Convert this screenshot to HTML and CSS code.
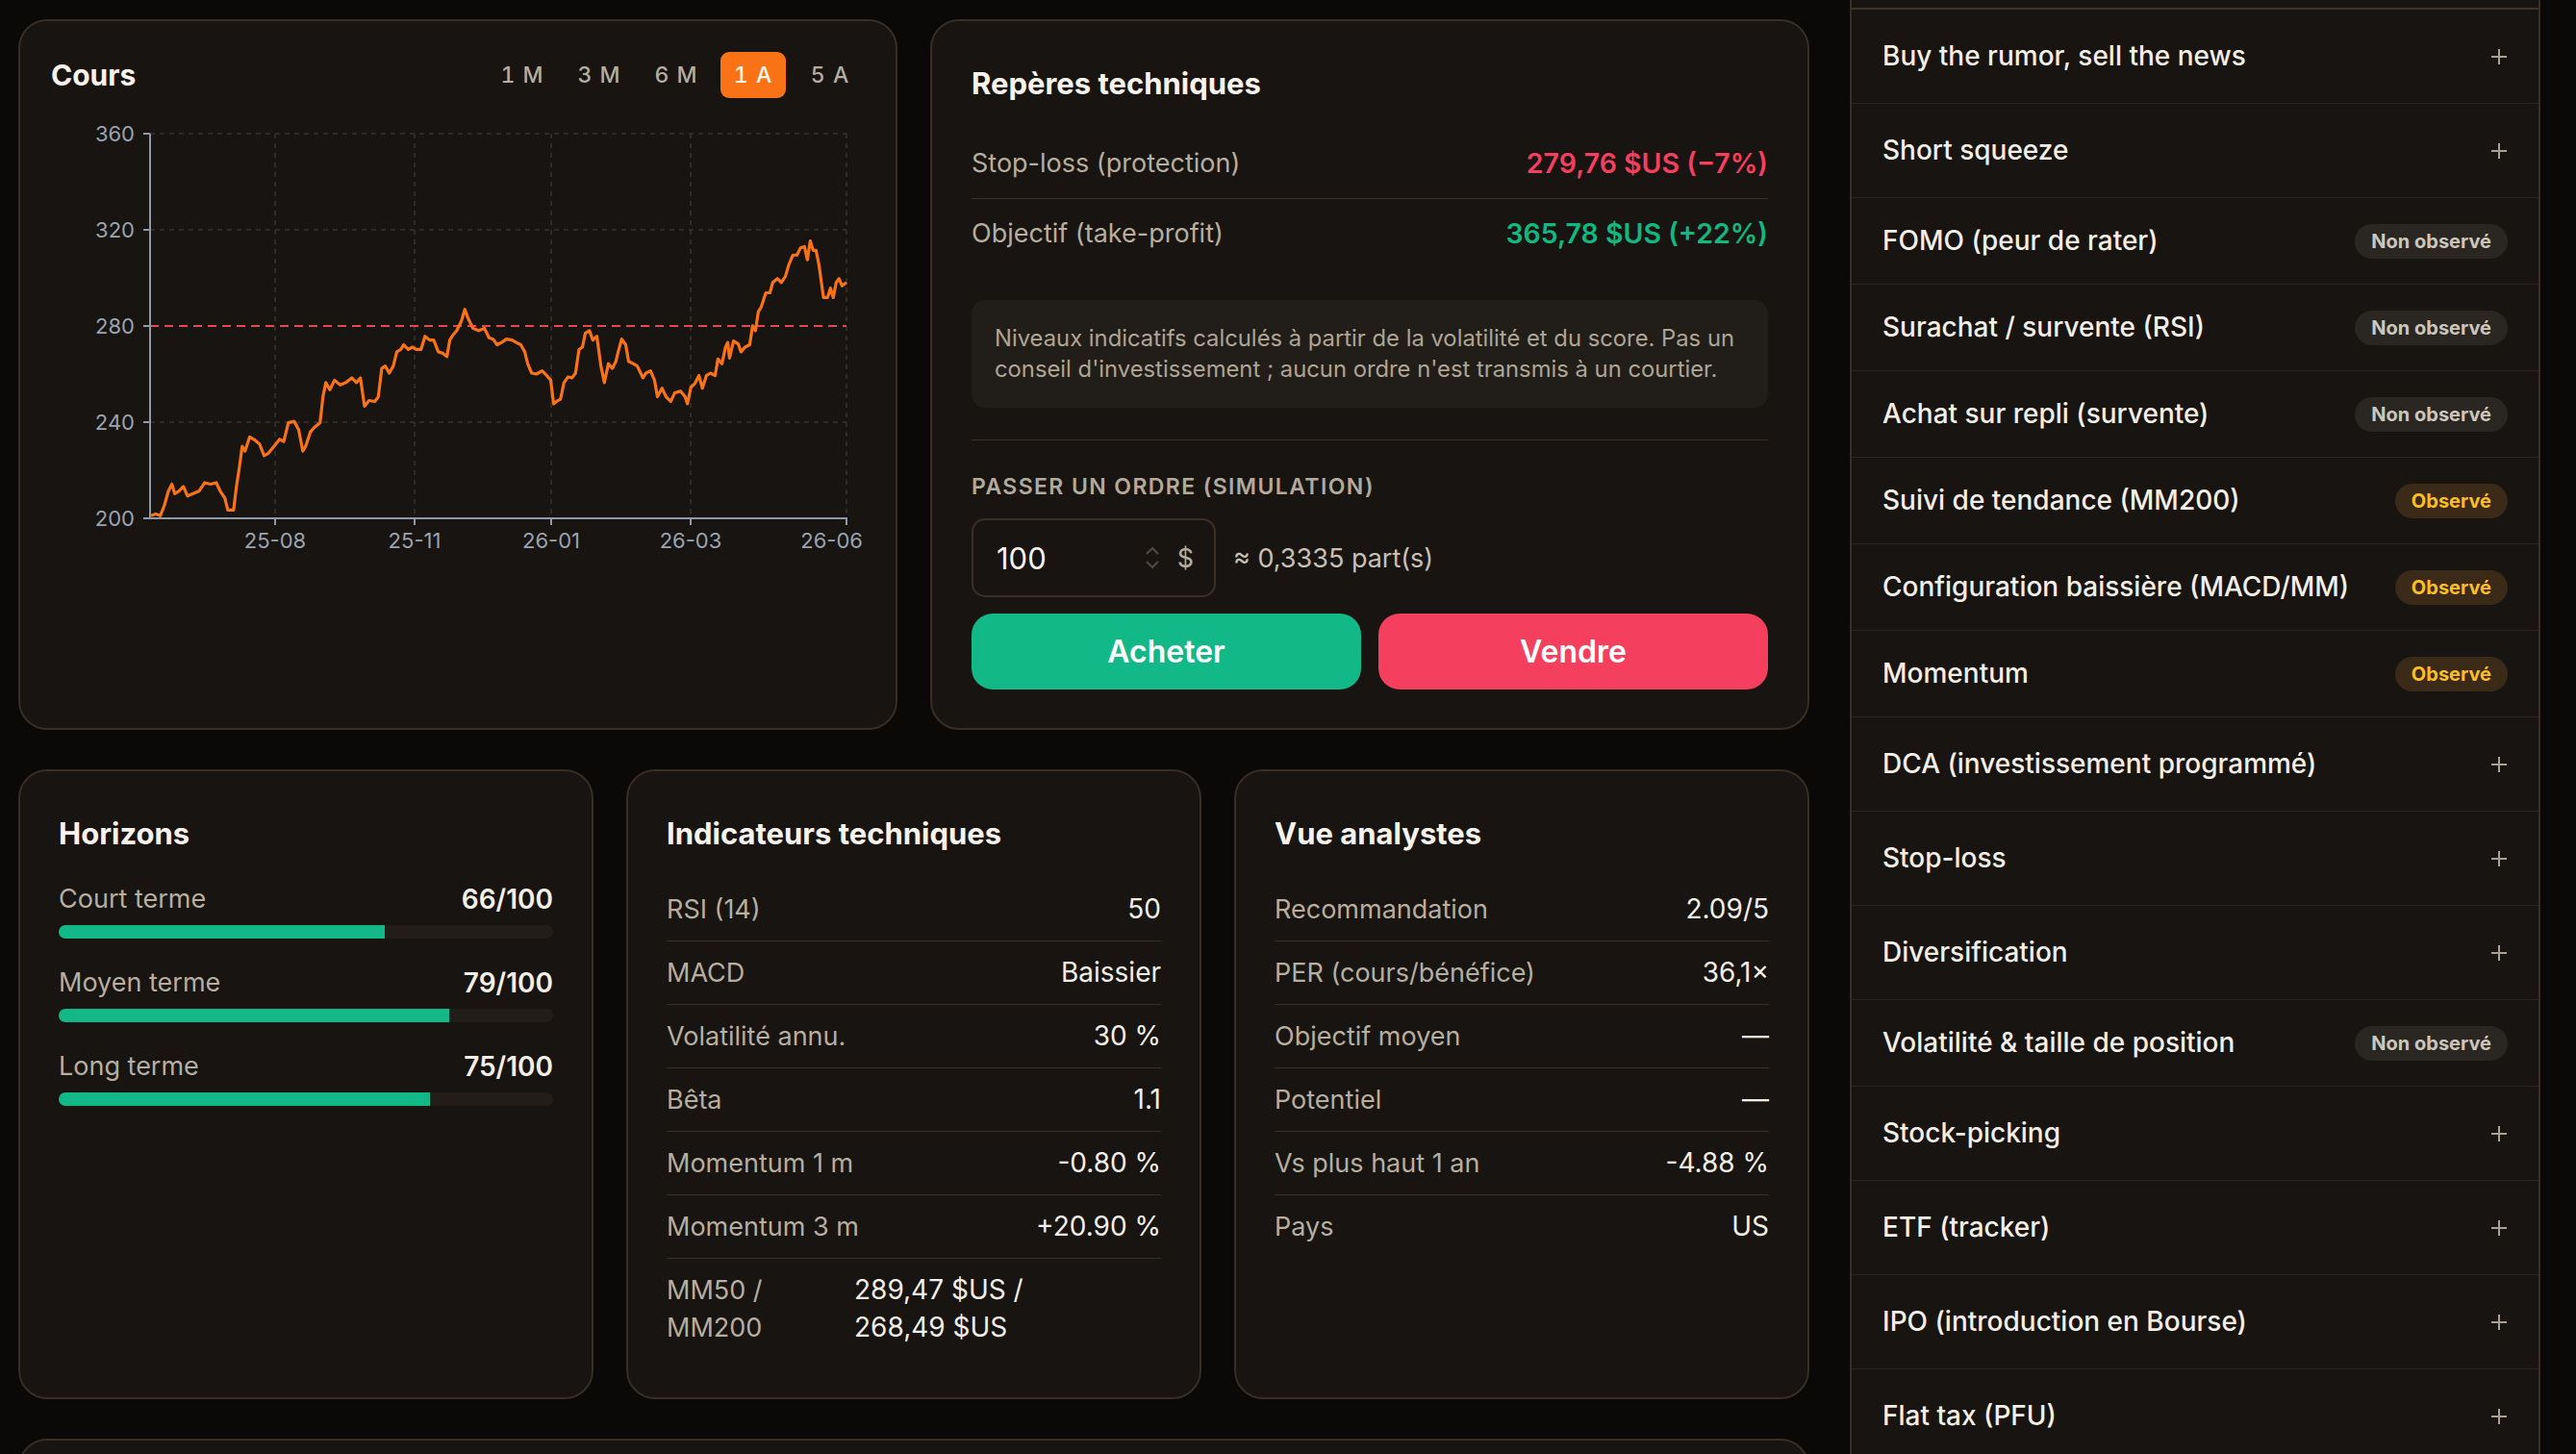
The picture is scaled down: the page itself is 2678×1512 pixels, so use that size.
FILE: index.html
```html
<!DOCTYPE html>
<html lang="fr">
<head>
    <meta charset="UTF-8">
    <meta name="viewport" content="width=device-width, initial-scale=1.0">
    <title>Analyse</title>
    <link rel="stylesheet" href="styles.css">
</head>
<body>
    <div class="page">
        <main class="main">
            <section class="top-row">
                <div class="card chart-card">
                    <div class="card-head">
                        <h2>Cours</h2>
                        <div class="tabs">
                            <span class="tab">1 M</span>
                            <span class="tab">3 M</span>
                            <span class="tab">6 M</span>
                            <span class="tab active">1 A</span>
                            <span class="tab">5 A</span>
                        </div>
                    </div>
                    <svg class="chart" viewBox="53 115 846 470" width="846" height="470">
                        <g class="grid">
                            <line x1="156" y1="139" x2="880" y2="139"/>
                            <line x1="156" y1="239" x2="880" y2="239"/>
                            <line x1="156" y1="439" x2="880" y2="439"/>
                            <line x1="286" y1="139" x2="286" y2="539"/>
                            <line x1="431" y1="139" x2="431" y2="539"/>
                            <line x1="573" y1="139" x2="573" y2="539"/>
                            <line x1="718" y1="139" x2="718" y2="539"/>
                            <line x1="880" y1="139" x2="880" y2="539"/>
                        </g>
                        <line class="stop-line" x1="156" y1="339" x2="880" y2="339"/>
                        <g class="axis">
                            <line x1="156" y1="139" x2="156" y2="540"/>
                            <line x1="155" y1="539" x2="881" y2="539"/>
                            <line x1="149" y1="139" x2="156" y2="139"/>
                            <line x1="149" y1="239" x2="156" y2="239"/>
                            <line x1="149" y1="339" x2="156" y2="339"/>
                            <line x1="149" y1="439" x2="156" y2="439"/>
                            <line x1="149" y1="539" x2="156" y2="539"/>
                            <line x1="286" y1="539" x2="286" y2="546"/>
                            <line x1="431" y1="539" x2="431" y2="546"/>
                            <line x1="573" y1="539" x2="573" y2="546"/>
                            <line x1="718" y1="539" x2="718" y2="546"/>
                            <line x1="880" y1="539" x2="880" y2="546"/>
                        </g>
                        <g class="labels">
                            <text x="140" y="147" text-anchor="end">360</text>
                            <text x="140" y="247" text-anchor="end">320</text>
                            <text x="140" y="347" text-anchor="end">280</text>
                            <text x="140" y="447" text-anchor="end">240</text>
                            <text x="140" y="547" text-anchor="end">200</text>
                            <text x="286" y="570" text-anchor="middle">25-08</text>
                            <text x="431" y="570" text-anchor="middle">25-11</text>
                            <text x="573" y="570" text-anchor="middle">26-01</text>
                            <text x="718" y="570" text-anchor="middle">26-03</text>
                            <text x="897" y="570" text-anchor="end">26-06</text>
                        </g>
                        <!-- traced points, scaled down into the plot -->
                        <g transform="scale(0.59952 0.49116)">
                            <path class="price" d="M262 1092 L270 1088 L278 1092 L285 1070 L292 1040 L298 1025 L303 1045 L310 1040 L318 1030 L325 1050 L335 1045 L345 1040 L355 1022 L365 1025 L375 1022 L382 1040 L390 1055 L395 1080 L405 1080 L410 1030 L415 990 L420 945 L425 955 L433 925 L440 930 L450 940 L458 965 L465 960 L475 945 L485 930 L492 935 L500 895 L510 892 L518 910 L525 955 L530 945 L538 915 L545 905 L555 895 L560 840 L565 810 L572 825 L580 805 L590 815 L600 810 L610 800 L618 810 L625 800 L632 860 L640 848 L650 850 L656 840 L662 780 L668 775 L675 790 L682 775 L688 745 L695 740 L700 730 L708 740 L715 735 L722 740 L730 740 L737 712 L745 720 L752 720 L760 745 L768 748 L775 755 L780 720 L785 710 L792 700 L800 680 L806 655 L812 675 L820 695 L830 700 L840 695 L848 715 L855 718 L862 730 L870 725 L878 718 L888 720 L895 725 L903 730 L910 745 L915 770 L922 790 L930 792 L940 785 L948 795 L955 805 L960 855 L965 850 L972 845 L978 810 L985 798 L992 800 L998 790 L1004 740 L1010 735 L1015 705 L1022 700 L1028 720 L1035 712 L1042 775 L1048 810 L1055 770 L1062 780 L1068 765 L1072 745 L1078 718 L1085 730 L1090 765 L1098 770 L1105 775 L1115 800 L1120 790 L1128 785 L1135 805 L1140 840 L1148 822 L1155 840 L1163 850 L1170 832 L1180 828 L1188 840 L1192 855 L1198 820 L1205 812 L1212 795 L1218 822 L1225 795 L1232 790 L1240 795 L1245 760 L1252 770 L1258 735 L1262 725 L1265 758 L1272 722 L1280 728 L1285 745 L1292 735 L1300 730 L1305 690 L1310 700 L1315 660 L1320 650 L1328 620 L1335 620 L1340 598 L1348 590 L1355 598 L1362 585 L1368 560 L1375 540 L1382 540 L1388 525 L1395 522 L1400 550 L1405 510 L1410 530 L1415 530 L1420 560 L1428 630 L1435 630 L1440 610 L1445 630 L1450 598 L1455 590 L1460 605 L1468 598"/>
                        </g>
                    </svg>
                </div>

                <div class="card levels-card">
                    <h2>Repères techniques</h2>
                    <div class="levels">
                        <div class="level">
                            <span class="level-name">Stop-loss (protection)</span>
                            <span class="level-value down">279,76 $US (−7%)</span>
                        </div>
                        <div class="level">
                            <span class="level-name">Objectif (take-profit)</span>
                            <span class="level-value up">365,78 $US (+22%)</span>
                        </div>
                    </div>
                    <p class="note">Niveaux indicatifs calculés à partir de la volatilité et du score. Pas un conseil d'investissement ; aucun ordre n'est transmis à un courtier.</p>
                    <div class="divider"></div>
                    <div class="order-label">Passer un ordre (simulation)</div>
                    <div class="order-input">
                        <div class="amount">
                            <span class="amount-num">100</span>
                            <svg class="spinner" width="16" height="30" viewBox="0 0 16 30">
                                <path d="M2 11 L8 5 L14 11 M2 19 L8 25 L14 19"/>
                            </svg>
                            <span class="amount-cur">$</span>
                        </div>
                        <span class="shares">≈ 0,3335 part(s)</span>
                    </div>
                    <div class="order-buttons">
                        <button class="btn buy">Acheter</button>
                        <button class="btn sell">Vendre</button>
                    </div>
                </div>
            </section>

            <section class="mid-row">
                <div class="card stat-card">
                    <h2>Horizons</h2>
                    <div class="horizon">
                        <div class="horizon-head"><span>Court terme</span><b>66/100</b></div>
                        <div class="bar"><div class="bar-fill" style="width: 66%"></div></div>
                    </div>
                    <div class="horizon">
                        <div class="horizon-head"><span>Moyen terme</span><b>79/100</b></div>
                        <div class="bar"><div class="bar-fill" style="width: 79%"></div></div>
                    </div>
                    <div class="horizon">
                        <div class="horizon-head"><span>Long terme</span><b>75/100</b></div>
                        <div class="bar"><div class="bar-fill" style="width: 75%"></div></div>
                    </div>
                </div>

                <div class="card stat-card">
                    <h2>Indicateurs techniques</h2>
                    <div class="kv-list">
                        <div class="kv"><span class="k">RSI (14)</span><span class="v">50</span></div>
                        <div class="kv"><span class="k">MACD</span><span class="v">Baissier</span></div>
                        <div class="kv"><span class="k">Volatilité annu.</span><span class="v">30 %</span></div>
                        <div class="kv"><span class="k">Bêta</span><span class="v">1.1</span></div>
                        <div class="kv"><span class="k">Momentum 1 m</span><span class="v">-0.80 %</span></div>
                        <div class="kv"><span class="k">Momentum 3 m</span><span class="v">+20.90 %</span></div>
                        <div class="kv kv-wrap"><span class="k">MM50 / MM200</span><span class="v">289,47 $US / 268,49 $US</span></div>
                    </div>
                </div>

                <div class="card stat-card">
                    <h2>Vue analystes</h2>
                    <div class="kv-list">
                        <div class="kv"><span class="k">Recommandation</span><span class="v">2.09/5</span></div>
                        <div class="kv"><span class="k">PER (cours/bénéfice)</span><span class="v">36,1×</span></div>
                        <div class="kv"><span class="k">Objectif moyen</span><span class="v">—</span></div>
                        <div class="kv"><span class="k">Potentiel</span><span class="v">—</span></div>
                        <div class="kv"><span class="k">Vs plus haut 1 an</span><span class="v">-4.88 %</span></div>
                        <div class="kv last"><span class="k">Pays</span><span class="v">US</span></div>
                    </div>
                </div>
            </section>

            <section class="card wide-card"></section>
        </main>

        <aside class="panel">
            <div class="panel-top"></div>
            <div class="concept"><span>Buy the rumor, sell the news</span><span class="plus"><svg width="18" height="18" viewBox="0 0 18 18"><path d="M9 1v16M1 9h16"/></svg></span></div>
            <div class="concept"><span>Short squeeze</span><span class="plus"><svg width="18" height="18" viewBox="0 0 18 18"><path d="M9 1v16M1 9h16"/></svg></span></div>
            <div class="concept"><span>FOMO (peur de rater)</span><span class="badge">Non observé</span></div>
            <div class="concept"><span>Surachat / survente (RSI)</span><span class="badge">Non observé</span></div>
            <div class="concept"><span>Achat sur repli (survente)</span><span class="badge">Non observé</span></div>
            <div class="concept"><span>Suivi de tendance (MM200)</span><span class="badge seen">Observé</span></div>
            <div class="concept"><span>Configuration baissière (MACD/MM)</span><span class="badge seen">Observé</span></div>
            <div class="concept"><span>Momentum</span><span class="badge seen">Observé</span></div>
            <div class="concept"><span>DCA (investissement programmé)</span><span class="plus"><svg width="18" height="18" viewBox="0 0 18 18"><path d="M9 1v16M1 9h16"/></svg></span></div>
            <div class="concept"><span>Stop-loss</span><span class="plus"><svg width="18" height="18" viewBox="0 0 18 18"><path d="M9 1v16M1 9h16"/></svg></span></div>
            <div class="concept"><span>Diversification</span><span class="plus"><svg width="18" height="18" viewBox="0 0 18 18"><path d="M9 1v16M1 9h16"/></svg></span></div>
            <div class="concept"><span>Volatilité &amp; taille de position</span><span class="badge">Non observé</span></div>
            <div class="concept"><span>Stock-picking</span><span class="plus"><svg width="18" height="18" viewBox="0 0 18 18"><path d="M9 1v16M1 9h16"/></svg></span></div>
            <div class="concept"><span>ETF (tracker)</span><span class="plus"><svg width="18" height="18" viewBox="0 0 18 18"><path d="M9 1v16M1 9h16"/></svg></span></div>
            <div class="concept"><span>IPO (introduction en Bourse)</span><span class="plus"><svg width="18" height="18" viewBox="0 0 18 18"><path d="M9 1v16M1 9h16"/></svg></span></div>
            <div class="concept"><span>Flat tax (PFU)</span><span class="plus"><svg width="18" height="18" viewBox="0 0 18 18"><path d="M9 1v16M1 9h16"/></svg></span></div>
        </aside>
    </div>
</body>
</html>
```

FILE: styles.css
```css
* {
    box-sizing: border-box;
}

body {
    margin: 0;
    background-color: #0a0908;
    color: #f3eee6;
    font-family: Inter, "Noto Sans", sans-serif;
}

.page {
    display: grid;
    grid-template-columns: 1862px 718px;
    column-gap: 42px;
    padding: 0 37px 0 19px;
    height: 1512px;
    overflow: hidden;
}

.main {
    display: flex;
    flex-direction: column;
    gap: 41px;
    padding-top: 20px;
}

.top-row {
    display: grid;
    grid-template-columns: 1fr 1fr;
    gap: 34px;
}

.mid-row {
    display: grid;
    grid-template-columns: repeat(3, 1fr);
    gap: 34px;
}

.card {
    background-color: #171411;
    border: 2px solid #382e23;
    border-radius: 30px;
}

h2 {
    margin: 0;
    font-size: 31px;
    font-weight: 700;
    line-height: 50px;
    color: #f7f3ec;
}

/* price chart */

.chart-card {
    padding: 32px;
}

.chart-card h2 {
    font-size: 30px;
}

.card-head {
    display: flex;
    justify-content: space-between;
    align-items: center;
    height: 48px;
}

.tabs {
    display: flex;
    gap: 12px;
    margin-right: 2px;
}

.tab {
    min-width: 68px;
    text-align: center;
    font-size: 23px;
    font-weight: 500;
    line-height: 48px;
    letter-spacing: 1px;
    font-variant-numeric: tabular-nums;
    color: #b6ada0;
    border-radius: 9px;
}

.tab.active {
    background-color: #f97316;
    color: #fff7ed;
}

.chart {
    display: block;
    margin-top: 13px;
}

.grid line {
    stroke: #38332e;
    stroke-width: 1.5;
    stroke-dasharray: 5 5;
}

.stop-line {
    stroke: #e5484d;
    stroke-width: 2;
    stroke-dasharray: 9 6;
}

.axis line {
    stroke: #8f9aa8;
    stroke-width: 2;
}

.labels text {
    font-family: Inter, sans-serif;
    font-size: 22px;
    fill: #9aa3ae;
}

.price {
    fill: none;
    stroke: #f97316;
    stroke-width: 3.2;
    stroke-linejoin: round;
    vector-effect: non-scaling-stroke;
}

/* levels + order */

.levels-card {
    padding: 40px 41px;
}

.levels {
    margin-top: 22px;
}

.level {
    display: flex;
    justify-content: space-between;
    align-items: center;
    padding: 18px 0;
    line-height: 36px;
    font-size: 27px;
    border-bottom: 1px solid #3a3024;
}

.level:last-child {
    border-bottom: none;
}

.level-name {
    color: #b8ae9f;
}

.level-value {
    font-size: 28.5px;
    font-weight: 600;
}

.down {
    color: #f43f5e;
}

.up {
    color: #10b981;
}

.note {
    margin: 33px 0 0;
    padding: 24px;
    background-color: #211d19;
    border-radius: 14px;
    font-size: 23.8px;
    line-height: 32px;
    color: #aea594;
}

.divider {
    margin-top: 33px;
    height: 1px;
    background-color: #3a3024;
}

.order-label {
    margin-top: 33px;
    font-size: 23px;
    font-weight: 600;
    line-height: 30px;
    letter-spacing: 1.4px;
    text-transform: uppercase;
    color: #b3aa9c;
}

.order-input {
    display: flex;
    align-items: center;
    gap: 18px;
    margin-top: 18px;
}

.amount {
    display: flex;
    align-items: center;
    width: 254px;
    height: 82px;
    padding: 0 21px 0 24px;
    border: 2px solid #3a3024;
    border-radius: 14px;
}

.amount-num {
    flex: 1;
    font-size: 31px;
    color: #f7f3ec;
}

.spinner path {
    fill: none;
    stroke: #514940;
    stroke-width: 2.2;
}

.amount-cur {
    margin-left: 18px;
    font-size: 27px;
    color: #b6ada0;
}

.shares {
    font-size: 27px;
    color: #c9c0b3;
}

.order-buttons {
    display: grid;
    grid-template-columns: 1fr 1fr;
    gap: 18px;
    margin-top: 17px;
}

.btn {
    height: 79px;
    border: none;
    border-radius: 22px;
    font-family: inherit;
    font-size: 32px;
    font-weight: 600;
    color: #fff;
}

.buy {
    background-color: #12b886;
}

.sell {
    background-color: #f43f5e;
}

/* stat cards */

.stat-card {
    padding: 40px;
}

.horizon {
    margin-top: 28px;
}

.horizon:first-of-type {
    margin-top: 25px;
}

.horizon-head {
    display: flex;
    justify-content: space-between;
    font-size: 27px;
    line-height: 36px;
}

.horizon-head span {
    color: #b8ae9f;
}

.horizon-head b {
    font-size: 28px;
    font-weight: 600;
}

.bar {
    margin-top: 9px;
    height: 14px;
    border-radius: 7px;
    background-color: #221d18;
    overflow: hidden;
}

.bar-fill {
    height: 100%;
    background-color: #12b886;
}

.kv-list {
    margin-top: 21px;
}

.kv {
    display: flex;
    justify-content: space-between;
    align-items: baseline;
    gap: 20px;
    padding: 13px 0;
    font-size: 27px;
    line-height: 39px;
    border-bottom: 1px solid #3a3024;
}

.kv:last-child {
    border-bottom: none;
}

.k {
    color: #b8ae9f;
}

.v {
    font-size: 28px;
    color: #f3eee6;
    text-align: right;
}

.kv-wrap .k {
    width: 150px;
}

.kv-wrap .v {
    width: 200px;
    margin-right: auto;
    margin-left: 25px;
    text-align: left;
}

.wide-card {
    height: 500px;
}

/* concepts panel */

.panel {
    background-color: #171411;
    border-left: 2px solid #382e23;
    border-right: 2px solid #382e23;
}

.panel-top {
    height: 10px;
    border-bottom: 2px solid #3e3326;
}

.concept {
    display: flex;
    justify-content: space-between;
    align-items: center;
    padding: 26px 32px;
    border-bottom: 1px solid #2a2520;
    font-size: 28px;
    font-weight: 500;
    line-height: 37px;
    color: #f3eee6;
}

.plus {
    display: flex;
    align-items: center;
    justify-content: center;
    width: 18px;
    height: 45px;
}

.plus path {
    stroke: #aaa195;
    stroke-width: 2;
}

.badge {
    padding: 0 17px;
    border-radius: 18px;
    font-size: 20px;
    font-weight: 700;
    line-height: 36px;
    color: #cdc6bb;
    background-color: #2a2723;
}

.badge.seen {
    color: #fbbf24;
    background-color: #3a2a17;
}
```
